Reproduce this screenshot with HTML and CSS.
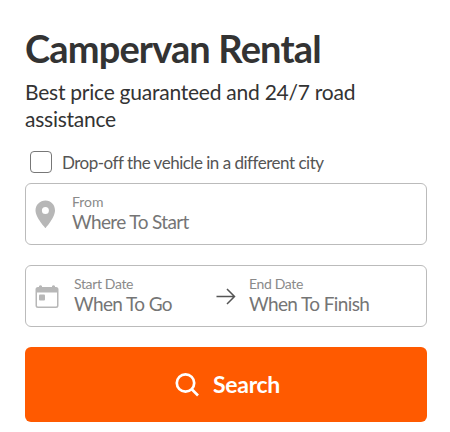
FILE: index.html
```html
<!DOCTYPE html>
<html lang="en">
<head>
    <meta charset="UTF-8">
    <meta name="viewport" content="width=device-width, initial-scale=1.0">
    <title>Campervan Rental</title>
    <link rel="stylesheet" href="styles.css">
</head>
<body>
    <main class="search-box">
        <h1 class="title">Campervan Rental</h1>
        <p class="subtitle">Best price guaranteed and 24/7 road assistance</p>

        <form class="search-form">
            <label class="dropoff">
                <input type="checkbox" class="checkbox">
                <span class="dropoff-text">Drop-off the vehicle in a different city</span>
            </label>

            <!-- Pick-up location -->
            <div class="field">
                <svg class="icon-pin" width="20" height="28" viewBox="0 0 20 28">
                    <path fill="#b7b7b7" fill-rule="evenodd" d="M10.500 .500C4.900 .500 .500 4.900 .500 10.400C.500 17.500 10.500 28 10.500 28S20 17.500 20 10.400C20 4.900 16.100 .500 10.500 .500ZM10.400 7A3.500 3.500 0 1 1 10.400 14A3.500 3.500 0 1 1 10.400 7Z"/>
                </svg>
                <div class="field-text from">
                    <span class="label">From</span>
                    <span class="value">Where To Start</span>
                </div>
            </div>

            <!-- Travel dates -->
            <div class="field dates">
                <svg class="icon-calendar" width="24" height="24" viewBox="0 0 24 24">
                    <path fill="#b7b7b7" fill-rule="evenodd" d="M4 2Q5.500 .500 7 2V3H17V2Q18.500 .500 20 2V3H21Q23.500 3 23.500 5.500V21.500Q23.500 24 21 24H3Q.500 24 .500 21.500V5.500Q.500 3 3 3H4ZM2 8.500V21.500Q2 22.500 3 22.500H21Q22 22.500 22 21.500V8.500Z"/>
                    <rect x="4" y="10.500" width="6" height="6" rx="1" fill="#b7b7b7"/>
                </svg>
                <div class="field-text start">
                    <span class="label">Start Date</span>
                    <span class="value">When To Go</span>
                </div>
                <svg class="icon-arrow" width="20" height="18" viewBox="0 0 20 18" fill="none" stroke="#555" stroke-width="1.500">
                    <path d="M.500 9.500H18.500M11 2L18.500 9.500L11 17"/>
                </svg>
                <div class="field-text end">
                    <span class="label">End Date</span>
                    <span class="value">When To Finish</span>
                </div>
            </div>

            <button type="button" class="search-button">
                <svg class="icon-search" width="25" height="25" viewBox="0 0 25 25" fill="none" stroke="#fff" stroke-width="2.700">
                    <circle cx="10.500" cy="11" r="8.700"/>
                    <path d="M16.500 17L23 23.500"/>
                </svg>
                <span class="search-text">Search</span>
            </button>
        </form>
    </main>
</body>
</html>
```
FILE: styles.css
```css
* {
    box-sizing: border-box;
}

body {
    margin: 0;
    background: #fff;
    color: #333;
    font-family: Lato, sans-serif;
}

.search-box {
    width: 402px;
    margin-left: 25px;
    padding-top: 23px;
}

.title {
    margin: 0;
    font-size: 38px;
    line-height: 50px;
    font-weight: 700;
    letter-spacing: -0.85px;
    white-space: nowrap;
}

.subtitle {
    margin: 5px 0 0;
    font-size: 21px;
    line-height: 27px;
    letter-spacing: -0.24px;
}

.search-form {
    margin-top: 18px;
}

.dropoff {
    display: flex;
    align-items: center;
    height: 24px;
    padding-left: 5px;
}

.checkbox {
    appearance: none;
    width: 22px;
    height: 22px;
    margin: 0 10px 0 0;
    border: 1px solid #777;
    border-radius: 4px;
}

.dropoff-text {
    color: #555;
    font-size: 17px;
    letter-spacing: -0.49px;
    white-space: nowrap;
}

.field {
    display: flex;
    align-items: center;
    height: 62px;
    margin-top: 9px;
    padding-left: 9px;
    border: 1px solid #bbb;
    border-radius: 6px;
}

.dates {
    margin-top: 20px;
}

.field-text {
    display: flex;
    flex-direction: column;
    padding-bottom: 3px;
    white-space: nowrap;
}

.from {
    margin-left: 17px;
}

.start {
    width: 142px;
    margin-left: 15px;
}

.end {
    margin-left: 13px;
}

.label {
    color: #8a8a8a;
    font-size: 14px;
    line-height: 18px;
    letter-spacing: -0.35px;
}

.from .label {
    letter-spacing: 0;
}

.value {
    color: #757575;
    font-size: 19px;
    line-height: 22px;
    letter-spacing: -0.62px;
}

.search-button {
    display: flex;
    align-items: center;
    width: 100%;
    height: 75px;
    margin-top: 20px;
    padding: 0 0 0 150px;
    border: 0;
    border-radius: 6px;
    background: #ff5a00;
    color: #fff;
    font-family: inherit;
}

.search-text {
    margin-left: 13px;
    padding-bottom: 1px;
    font-size: 23px;
    font-weight: 700;
    letter-spacing: -0.3px;
}
```
